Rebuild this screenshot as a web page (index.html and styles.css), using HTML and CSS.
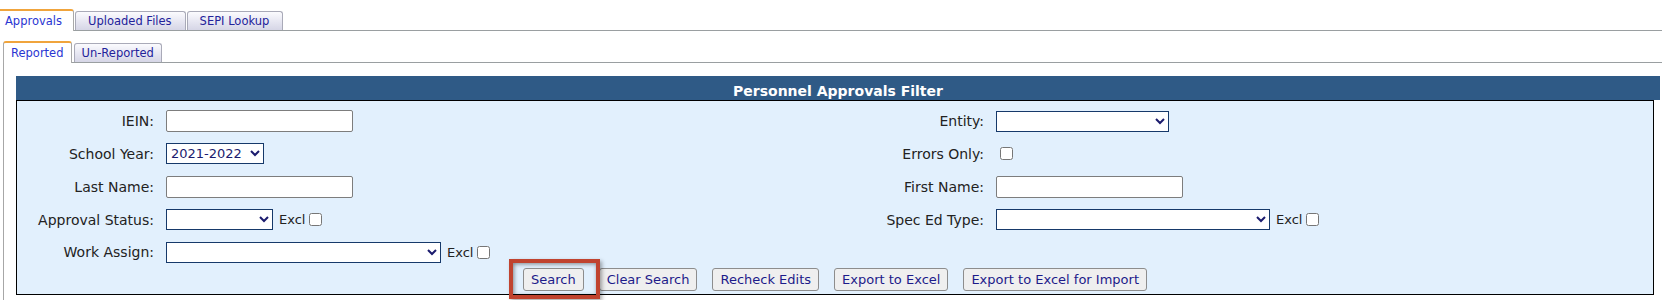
FILE: index.html
```html
<!DOCTYPE html>
<html lang="en">
<head>
  <meta charset="UTF-8">
  <title>Personnel Approvals</title>
  <link rel="stylesheet" href="styles.css">
</head>
<body>
  <div class="tabbar outer">
    <span class="tab active">Approvals</span>
    <span class="tab">Uploaded Files</span>
    <span class="tab">SEPI Lookup</span>
  </div>

  <div class="subtabs">
    <div class="tabbar inner">
      <span class="tab active">Reported</span>
      <span class="tab">Un-Reported</span>
    </div>

    <div class="panel">
      <div class="filter-title">Personnel Approvals Filter</div>
      <div class="filter">
        <div class="grid">
          <label>IEIN:</label>
          <div class="field"><input type="text" class="text"></div>
          <label>Entity:</label>
          <div class="field"><select class="sel w-entity"><option></option></select></div>

          <label>School Year:</label>
          <div class="field"><select class="sel w-year"><option>2021-2022</option></select></div>
          <label>Errors Only:</label>
          <div class="field"><input type="checkbox"></div>

          <label>Last Name:</label>
          <div class="field"><input type="text" class="text"></div>
          <label>First Name:</label>
          <div class="field"><input type="text" class="text"></div>

          <label>Approval Status:</label>
          <div class="field"><select class="sel w-status"><option></option></select><span class="excl">Excl</span><input type="checkbox"></div>
          <label>Spec Ed Type:</label>
          <div class="field"><select class="sel w-wide"><option></option></select><span class="excl">Excl</span><input type="checkbox"></div>

          <label>Work Assign:</label>
          <div class="field"><select class="sel w-wide2"><option></option></select><span class="excl">Excl</span><input type="checkbox"></div>
        </div>

        <div class="actions">
          <span class="highlight"><button>Search</button></span>
          <button>Clear Search</button>
          <button>Recheck Edits</button>
          <button>Export to Excel</button>
          <button>Export to Excel for Import</button>
        </div>
      </div>
    </div>
  </div>
</body>
</html>
```

FILE: styles.css
```css
body {
  margin: 0;
  font-family: 'DejaVu Sans', Verdana, sans-serif;
  background: #fff;
  color: #222;
  overflow: hidden;
}

/* tab strips */
.tabbar {
  display: flex;
  align-items: flex-end;
  border-bottom: 1px solid #9a9fa1;
}
.tabbar.outer {
  padding-top: 9px;
  margin-left: -6px;
}
.tab {
  height: 18px;
  line-height: 18px;
  padding: 0 13px 0 12px;
  margin-left: 1px;
  font-size: 11.5px;
  color: #23229a;
  border: 1px solid #a9aab8;
  border-bottom: none;
  border-radius: 3px 3px 0 0;
  background: linear-gradient(#fbfbfe, #e4e4f0 60%, #d6d6e6);
}
.tab.active {
  height: 20px;
  line-height: 20px;
  padding: 0 11px 0 10px;
  margin-bottom: -1px;
  color: #2a35d2;
  background: #fff;
  border-top: 2px solid #f0a43c;
  border-color: #f0a43c #a9a9a9 #fff #a9a9a9;
}
.tabbar .tab:first-child {
  margin-left: 0;
}

.subtabs {
  margin: 10px 0 0 3px;
}
.tabbar.inner .tab {
  padding: 0 7px;
  margin-left: 2px;
}
.tabbar.inner .tab:first-child {
  margin-left: 0;
}

.panel {
  border-left: 1px solid #a7a7a7;
  padding: 13px 2px 5px 12px;
}

/* filter box */
.filter-title {
  height: 24px;
  box-sizing: border-box;
  padding-top: 7px;
  line-height: 17px;
  background: #2f5a86;
  color: #fff;
  font-size: 14px;
  font-weight: bold;
  text-align: center;
}
.filter {
  margin-right: 6px;
  border: 1px solid #000;
  background: #e2f0fd;
  padding: 4px 0 3px;
}
.grid {
  display: grid;
  grid-template-columns: 137px 655px 151px 1fr;
  grid-template-rows: 32px 33px 33px 33px 32px;
  column-gap: 12px;
  align-items: center;
}
.grid label {
  text-align: right;
  font-size: 14px;
  color: #222;
}
.field {
  display: flex;
  align-items: center;
}

.text {
  width: 187px;
  height: 22px;
  box-sizing: border-box;
  border: 1px solid #7d7d7d;
  border-radius: 2px;
  background: #fff;
  margin: 0;
}
.sel {
  height: 21px;
  box-sizing: border-box;
  border: 1px solid #16396a;
  border-radius: 0;
  background: #fff;
  color: #1b1b6e;
  font-family: 'DejaVu Sans', Verdana, sans-serif;
  font-size: 13px;
  margin: 0;
}
.w-year { width: 98px; }
.w-status { width: 107px; }
.w-entity { width: 173px; }
.w-wide { width: 274px; }
.w-wide2 { width: 275px; }

.excl {
  margin-left: 6px;
  font-size: 13px;
  color: #222;
}
input[type="checkbox"] {
  width: 13px;
  height: 13px;
  margin: 0 0 0 4px;
}

/* buttons */
.actions {
  display: flex;
  justify-content: center;
  gap: 15px;
}
button {
  height: 23px;
  padding: 0 7px;
  font-family: 'DejaVu Sans', Verdana, sans-serif;
  font-size: 13px;
  color: #1d1b8a;
  background: #efefef;
  border: 1px solid #8d8d8d;
  border-radius: 3px;
}
.highlight {
  position: relative;
  display: inline-flex;
}
.highlight::after {
  content: "";
  position: absolute;
  left: -14px;
  right: -16px;
  top: -9px;
  bottom: -8px;
  border: 4px solid #c0432f;
  box-shadow: inset 1px 1px 4px rgba(0, 0, 0, 0.45), 2px 2px 4px rgba(0, 0, 0, 0.35);
  pointer-events: none;
}
```
